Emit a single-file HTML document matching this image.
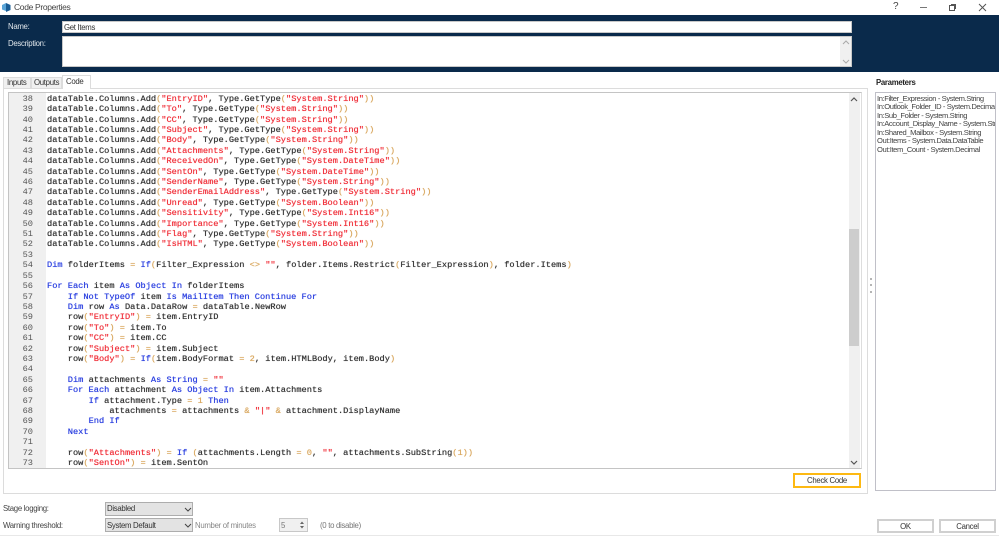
<!DOCTYPE html>
<html><head><meta charset="utf-8"><style>
html,body{margin:0;padding:0;background:#fff;width:999px;height:536px;overflow:hidden;font-family:"Liberation Sans",sans-serif;font-size:7.8px;letter-spacing:-.3px;color:#333}
.a{position:absolute;white-space:pre;line-height:11px}
.b{position:absolute;box-sizing:border-box}
#code{position:absolute;left:47px;top:93.8px;font:8.67px/10.4px "Liberation Mono",monospace;letter-spacing:0;color:#333;white-space:pre;margin:0;width:802px;height:374px;overflow:hidden;text-shadow:0 0 .5px currentColor}
#nums{position:absolute;left:9px;top:93.8px;width:24px;text-align:right;font:8.67px/10.4px "Liberation Mono",monospace;letter-spacing:0;color:#555;white-space:pre;margin:0;height:374px;overflow:hidden}
#code i{font-style:normal;color:#f0303a}
#code u{text-decoration:none;color:#2a3fe0}
#code b{font-weight:normal;color:#d9a860}
.btn{background:#fff;border:2px solid #d0d0d0;text-align:center;line-height:11px;color:#333}
</style></head><body>
<!-- title bar -->
<svg class="b" style="left:2px;top:3px" width="9" height="9" viewBox="0 0 9 9"><path d="M0 2 4 0v8L0 6.5z" fill="#5aa5d8"/><path d="M4 0 8.5 2v5L4 9z" fill="#1a5c94"/></svg>
<div class="a" style="left:14px;top:2px;font-size:8.5px;letter-spacing:-.33px;color:#444">Code Properties</div>
<div class="a" style="left:893px;top:1px;font-size:10px;color:#444">?</div>
<div class="b" style="left:920px;top:7px;width:7px;height:1px;background:#777"></div>
<div class="b" style="left:949px;top:5px;width:6px;height:6px;border:1px solid #555"></div>
<div class="b" style="left:951px;top:4px;width:5px;height:5px;border-top:1px solid #555;border-right:1px solid #555"></div>
<svg class="b" style="left:978px;top:3px" width="9" height="9" viewBox="0 0 9 9"><path d="M1 1 8 8M8 1 1 8" stroke="#555" stroke-width="1" fill="none"/></svg>
<!-- header -->
<div class="b" style="left:0;top:15px;width:999px;height:57px;background:#0a2a4b"></div>
<div class="a" style="left:8px;top:21px;color:#dfe5ea">Name:</div>
<div class="a" style="left:8px;top:38px;color:#dfe5ea">Description:</div>
<div class="b" style="left:62px;top:21px;width:790px;height:12px;background:#fff;border:1px solid #c8c8c8"></div>
<div class="a" style="left:64px;top:22px;color:#333">Get Items</div>
<div class="b" style="left:62px;top:36px;width:790px;height:31px;background:#fff;border:1px solid #c8c8c8"></div>
<div class="b" style="left:840px;top:37px;width:11px;height:29px;background:#f0f0f0"></div>
<svg class="b" style="left:842px;top:40px" width="8" height="24" viewBox="0 0 8 24"><path d="M1 4 4 1 7 4M1 20 4 23 7 20" stroke="#aaa" fill="none"/></svg>
<!-- tabs -->
<div class="b" style="left:3px;top:88px;width:865px;height:406px;border:1px solid #dcdcdc;background:#fff"></div>
<div class="b" style="left:3px;top:77px;width:28px;height:12px;background:#f0f0f0;border:1px solid #dcdcdc"></div>
<div class="a" style="left:7px;top:77px">Inputs</div>
<div class="b" style="left:31px;top:77px;width:31px;height:12px;background:#f0f0f0;border:1px solid #dcdcdc"></div>
<div class="a" style="left:34px;top:77px">Outputs</div>
<div class="b" style="left:62px;top:75px;width:29px;height:14px;background:#fff;border:1px solid #dcdcdc;border-bottom:0"></div>
<div class="a" style="left:66px;top:76px">Code</div>
<!-- editor -->
<div class="b" style="left:8px;top:92px;width:854px;height:377px;border:1px solid #c4c4c4;border-right-color:#ddd;background:#fff"></div>
<div class="b" style="left:9px;top:93px;width:37px;height:375px;background:#f0f0f0"></div>
<pre id="nums">38
39
40
41
42
43
44
45
46
47
48
49
50
51
52
53
54
55
56
57
58
59
60
61
62
63
64
65
66
67
68
69
70
71
72
73</pre>
<pre id="code">dataTable.Columns.Add<b>(</b><i>"EntryID"</i>, Type.GetType<b>(</b><i>"System.String"</i><b>))</b>
dataTable.Columns.Add<b>(</b><i>"To"</i>, Type.GetType<b>(</b><i>"System.String"</i><b>))</b>
dataTable.Columns.Add<b>(</b><i>"CC"</i>, Type.GetType<b>(</b><i>"System.String"</i><b>))</b>
dataTable.Columns.Add<b>(</b><i>"Subject"</i>, Type.GetType<b>(</b><i>"System.String"</i><b>))</b>
dataTable.Columns.Add<b>(</b><i>"Body"</i>, Type.GetType<b>(</b><i>"System.String"</i><b>))</b>
dataTable.Columns.Add<b>(</b><i>"Attachments"</i>, Type.GetType<b>(</b><i>"System.String"</i><b>))</b>
dataTable.Columns.Add<b>(</b><i>"ReceivedOn"</i>, Type.GetType<b>(</b><i>"System.DateTime"</i><b>))</b>
dataTable.Columns.Add<b>(</b><i>"SentOn"</i>, Type.GetType<b>(</b><i>"System.DateTime"</i><b>))</b>
dataTable.Columns.Add<b>(</b><i>"SenderName"</i>, Type.GetType<b>(</b><i>"System.String"</i><b>))</b>
dataTable.Columns.Add<b>(</b><i>"SenderEmailAddress"</i>, Type.GetType<b>(</b><i>"System.String"</i><b>))</b>
dataTable.Columns.Add<b>(</b><i>"Unread"</i>, Type.GetType<b>(</b><i>"System.Boolean"</i><b>))</b>
dataTable.Columns.Add<b>(</b><i>"Sensitivity"</i>, Type.GetType<b>(</b><i>"System.Int16"</i><b>))</b>
dataTable.Columns.Add<b>(</b><i>"Importance"</i>, Type.GetType<b>(</b><i>"System.Int16"</i><b>))</b>
dataTable.Columns.Add<b>(</b><i>"Flag"</i>, Type.GetType<b>(</b><i>"System.String"</i><b>))</b>
dataTable.Columns.Add<b>(</b><i>"IsHTML"</i>, Type.GetType<b>(</b><i>"System.Boolean"</i><b>))</b>

<u>Dim</u> folderItems <b>=</b> <u>If</u><b>(</b>Filter_Expression <b>&lt;&gt;</b> <i>""</i>, folder.Items.Restrict<b>(</b>Filter_Expression<b>)</b>, folder.Items<b>)</b>

<u>For Each</u> item <u>As Object In</u> folderItems
    <u>If Not TypeOf</u> item <u>Is MailItem Then Continue For</u>
    <u>Dim</u> row <u>As</u> Data.DataRow <b>=</b> dataTable.NewRow
    row<b>(</b><i>"EntryID"</i><b>)</b> <b>=</b> item.EntryID
    row<b>(</b><i>"To"</i><b>)</b> <b>=</b> item.To
    row<b>(</b><i>"CC"</i><b>)</b> <b>=</b> item.CC
    row<b>(</b><i>"Subject"</i><b>)</b> <b>=</b> item.Subject
    row<b>(</b><i>"Body"</i><b>)</b> <b>=</b> <u>If</u><b>(</b>item.BodyFormat <b>= 2</b>, item.HTMLBody, item.Body<b>)</b>

    <u>Dim</u> attachments <u>As String</u> <b>=</b> <i>""</i>
    <u>For Each</u> attachment <u>As Object In</u> item.Attachments
        <u>If</u> attachment.Type <b>= 1</b> <u>Then</u>
            attachments <b>=</b> attachments <b>&amp;</b> <i>"|"</i> <b>&amp;</b> attachment.DisplayName
        <u>End If</u>
    <u>Next</u>

    row<b>(</b><i>"Attachments"</i><b>)</b> <b>=</b> <u>If</u> <b>(</b>attachments.Length <b>= 0</b>, <i>""</i>, attachments.SubString<b>(1))</b>
    row<b>(</b><i>"SentOn"</i><b>)</b> <b>=</b> item.SentOn</pre>
<!-- scrollbar -->
<div class="b" style="left:849px;top:93px;width:11px;height:375px;background:#f0f0f0"></div>
<div class="b" style="left:849px;top:229px;width:10px;height:117px;background:#cdcdcd"></div>
<svg class="b" style="left:850px;top:96px" width="8" height="370" viewBox="0 0 8 370"><path d="M1 5 4 2 7 5M1 365 4 368 7 365" stroke="#555" stroke-width="1.2" fill="none"/></svg>
<!-- check code -->
<div class="b" style="left:793px;top:473px;width:68px;height:15px;background:#fff;border:2px solid #fdb913;text-align:center;line-height:11px;color:#333">Check Code</div>
<!-- splitter dots -->
<div class="b" style="left:870px;top:278px;width:2px;height:2px;background:#b5b5b5"></div>
<div class="b" style="left:870px;top:284px;width:2px;height:2px;background:#b5b5b5"></div>
<div class="b" style="left:870px;top:291px;width:2px;height:2px;background:#b5b5b5"></div>
<!-- parameters -->
<div class="a" style="left:876px;top:77px;font-weight:bold;color:#222">Parameters</div>
<div class="b" style="left:875px;top:92px;width:121px;height:399px;background:#fff;border:1px solid #c0c0c8;overflow:hidden">
<div style="position:absolute;left:1px;top:2px;white-space:pre;line-height:8.45px;font-size:7.6px;letter-spacing:-.4px;color:#444">In:Filter_Expression - System.String
In:Outlook_Folder_ID - System.Decimal
In:Sub_Folder - System.String
In:Account_Display_Name - System.String
In:Shared_Mailbox - System.String
Out:Items - System.Data.DataTable
Out:Item_Count - System.Decimal</div></div>
<!-- bottom -->
<div class="a" style="left:3px;top:503px;color:#444">Stage logging:</div>
<div class="a" style="left:3px;top:520px;color:#444">Warning threshold:</div>
<div class="b" style="left:105px;top:502px;width:88px;height:14px;background:#e3e3e3;border:1px solid #adadad"></div>
<div class="a" style="left:107px;top:503px;color:#333">Disabled</div>
<div class="b" style="left:105px;top:518px;width:88px;height:14px;background:#e3e3e3;border:1px solid #adadad"></div>
<div class="a" style="left:107px;top:520px;color:#333">System Default</div>
<svg class="b" style="left:184px;top:507px" width="8" height="22" viewBox="0 0 8 22"><path d="M1 1 4 4 7 1M1 17 4 20 7 17" stroke="#444" fill="none"/></svg>
<div class="a" style="left:195px;top:520px;color:#888">Number of minutes</div>
<div class="b" style="left:279px;top:518px;width:29px;height:14px;background:#f0f0f0;border:1px solid #c8c8c8"></div>
<div class="a" style="left:281px;top:520px;color:#777">5</div>
<svg class="b" style="left:298px;top:520px" width="8" height="10" viewBox="0 0 8 10"><path d="M2 4 4 1.5 6 4zM2 6 4 8.5 6 6z" fill="#666"/></svg>
<div class="a" style="left:320px;top:520px;color:#777">(0 to disable)</div>
<div class="b btn" style="left:877px;top:519px;width:57px;height:14px">OK</div>
<div class="b btn" style="left:939px;top:519px;width:57px;height:14px">Cancel</div>
<div class="b" style="left:0;top:535px;width:999px;height:1px;background:#e8e8e8"></div>
</body></html>
